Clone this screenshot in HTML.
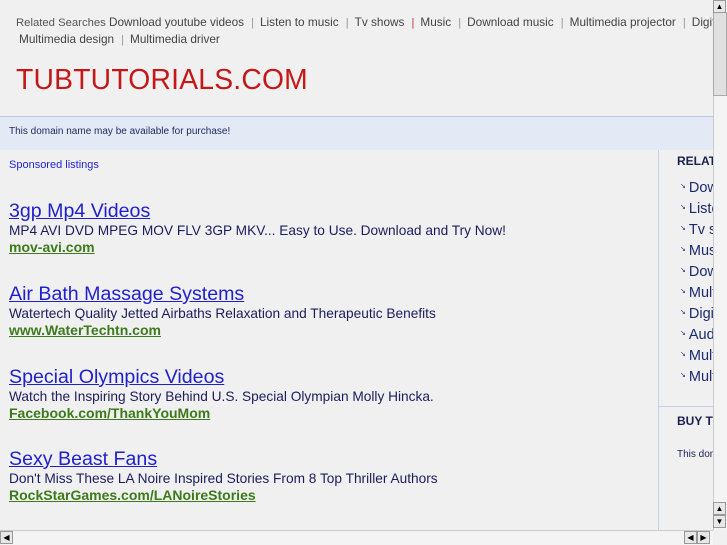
<!DOCTYPE html>
<html><head><meta charset="utf-8"><style>
*{margin:0;padding:0;box-sizing:border-box}
body{width:727px;height:545px;overflow:hidden;background:#f0f0f0;font-family:"Liberation Sans",sans-serif;position:relative}
.rs{position:absolute;left:16px;top:13px;font-size:11.3px;color:#555;white-space:nowrap;line-height:18px}
.rs .l{font-size:11.8px;color:#444}
.sep{color:#999;margin:0 6px 0 7px}
.logo{position:absolute;left:16px;top:63px;font-size:28.3px;color:#c41818;letter-spacing:0.2px}
.banner{position:absolute;left:0;top:116px;width:713px;height:34px;background:#e3e9f5;border-top:1px solid #b8c8e4;font-size:10px;color:#1c2a5c;padding:9px 9px}
.spons{position:absolute;left:9px;top:159px;font-size:11px;color:#2323d0}
.ad{position:absolute;left:9px;white-space:nowrap}
.ad .t{font-size:19.6px;color:#1f1fcc;text-decoration:underline;line-height:22px}
.ad .d{font-size:13.7px;color:#1c1c5c;line-height:17px}
.ad .u{font-size:14px;color:#3d7a1c;font-weight:bold;text-decoration:underline;line-height:17px}
.vl{position:absolute;left:658px;top:150px;width:1px;height:380px;background:#c4d0e8}
.hl{position:absolute;left:658px;top:406px;width:55px;height:1px;background:#c4d0e8}
.side{position:absolute;left:677px;font-size:12px;font-weight:bold;color:#1c2050;white-space:nowrap;overflow:hidden;width:36px}
.si{position:absolute;left:680px;font-size:14.5px;color:#1c2a6c;white-space:nowrap;overflow:hidden;width:33px}
.si i{font-style:normal;font-size:7px;vertical-align:4px;margin-right:3px}
.vs{position:absolute;left:713px;top:0;width:14px;height:530px;background:#f4f4f4;border-left:1px solid #ccc}
.thumb{position:absolute;left:713px;top:12px;width:14px;height:84px;background:#e0e0e0;border:1px solid #aaa}
.hs{position:absolute;left:0;top:530px;width:713px;height:15px;background:#f4f4f4;border-top:1px solid #ccc}
.btn{position:absolute;width:13px;height:13px;background:#e8e8e8;border:1px solid #999;font-size:8px;line-height:11px;text-align:center;color:#000}
</style></head><body>
<div class="rs">Related Searches <span class="l">Download youtube videos</span><span class="sep">|</span><span class="l">Listen to music</span><span class="sep">|</span><span class="l">Tv shows</span><span class="sep" style="color:#c33">|</span><span class="l">Music</span><span class="sep">|</span><span class="l">Download music</span><span class="sep">|</span><span class="l">Multimedia projector</span><span class="sep">|</span><span class="l">Digital</span></div>
<div class="rs" style="top:30px;left:19px"><span class="l">Multimedia design</span><span class="sep">|</span><span class="l">Multimedia driver</span></div>
<div class="logo">TUBTUTORIALS.COM</div>
<div class="banner">This domain name may be available for purchase!</div>
<div class="spons">Sponsored listings</div>
<div class="ad" style="top:200px"><div class="t">3gp Mp4 Videos</div><div class="d">MP4 AVI DVD MPEG MOV FLV 3GP MKV... Easy to Use. Download and Try Now!</div><div class="u">mov-avi.com</div></div>
<div class="ad" style="top:283px"><div class="t">Air Bath Massage Systems</div><div class="d">Watertech Quality Jetted Airbaths Relaxation and Therapeutic Benefits</div><div class="u">www.WaterTechtn.com</div></div>
<div class="ad" style="top:366px"><div class="t">Special Olympics Videos</div><div class="d">Watch the Inspiring Story Behind U.S. Special Olympian Molly Hincka.</div><div class="u">Facebook.com/ThankYouMom</div></div>
<div class="ad" style="top:448px"><div class="t">Sexy Beast Fans</div><div class="d">Don't Miss These LA Noire Inspired Stories From 8 Top Thriller Authors</div><div class="u">RockStarGames.com/LANoireStories</div></div>
<div class="vl"></div><div class="hl"></div>
<div class="side" style="top:154px">RELATED</div>
<div class="si" style="top:180px"><i>↘</i>Download</div>
<div class="si" style="top:201px"><i>↘</i>Listen</div>
<div class="si" style="top:222px"><i>↘</i>Tv shows</div>
<div class="si" style="top:243px"><i>↘</i>Music</div>
<div class="si" style="top:264px"><i>↘</i>Download</div>
<div class="si" style="top:285px"><i>↘</i>Multimedia</div>
<div class="si" style="top:306px"><i>↘</i>Digital</div>
<div class="si" style="top:327px"><i>↘</i>Audio</div>
<div class="si" style="top:348px"><i>↘</i>Multimedia</div>
<div class="si" style="top:369px"><i>↘</i>Multimedia</div>
<div class="side" style="top:414px">BUY THIS</div>
<div class="side" style="top:449px;font-size:10px;font-weight:normal;left:677px">This domain</div>
<div class="vs"></div>
<div class="thumb"></div>
<div class="btn" style="left:713px;top:0">▲</div>
<div class="btn" style="left:713px;top:502px">▲</div>
<div class="btn" style="left:713px;top:515px">▼</div>
<div class="hs"></div>
<div class="btn" style="left:0;top:531px">◀</div>
<div class="btn" style="left:684px;top:531px">◀</div>
<div class="btn" style="left:697px;top:531px">▶</div>
</body></html>
